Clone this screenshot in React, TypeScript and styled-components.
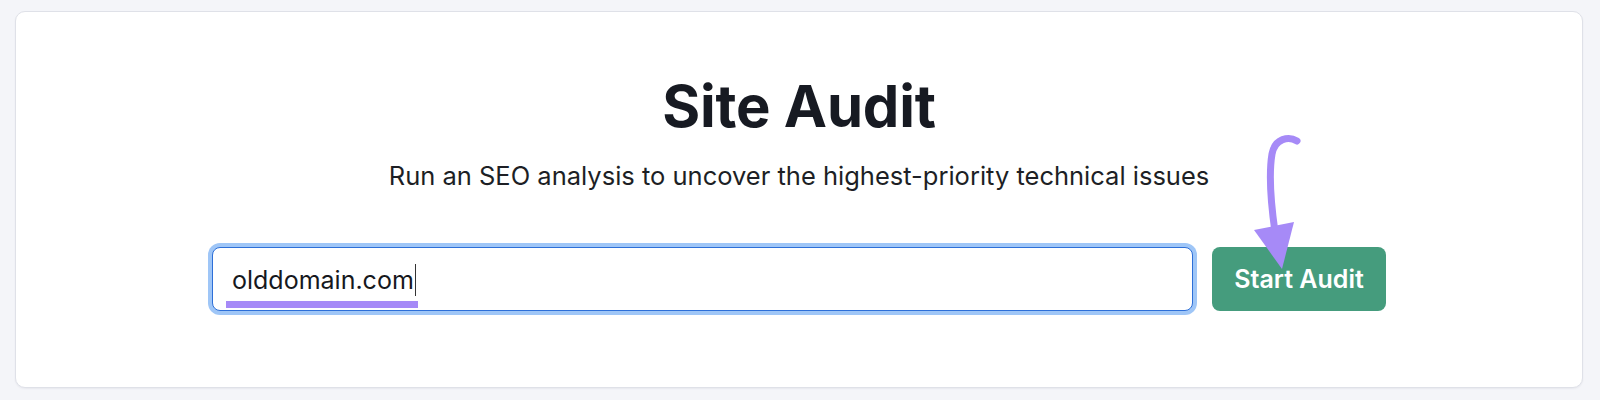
import styled, { createGlobalStyle } from 'styled-components'

const GlobalStyle = createGlobalStyle`
  html, body {
    margin: 0;
    padding: 0;
    background: #f4f5f9;
  }
  body {
    font-family: Inter, "Noto Sans", "Liberation Sans", sans-serif;
    -webkit-font-smoothing: antialiased;
  }
`

function App() {
  return (
    <>
      <GlobalStyle />
      <Page>
        <Card>
          <Title>Site Audit</Title>
          <Subtitle>Run an SEO analysis to uncover the highest-priority technical issues</Subtitle>
          <FormRow>
            <Field>
              <FieldText>
                olddomain.com
                <Caret />
                <Highlight />
              </FieldText>
            </Field>
            <StartButton type="button">Start Audit</StartButton>
            <Pointer width="60" height="145" viewBox="0 0 60 145">
              <path
                d="M52 9 C 44 4, 30 6, 27 22 C 24 40, 26 72, 30 100"
                fill="none"
                stroke="#a68af7"
                strokeWidth="7"
                strokeLinecap="round"
              />
              <path d="M9 98 L49 90 L37 137 Z" fill="#a68af7" />
            </Pointer>
          </FormRow>
        </Card>
      </Page>
    </>
  )
}

const Page = styled.div`
  padding: 11px 17px 12px 15px;
  box-sizing: border-box;
  height: 400px;
`

const Card = styled.div`
  height: 377px;
  box-sizing: border-box;
  background: #fff;
  border: 1px solid #dfe1e8;
  border-radius: 10px;
  box-shadow: 0 1px 2px rgba(30, 35, 60, 0.06);
  display: flex;
  flex-direction: column;
  align-items: center;
  padding-top: 59px;
`

const Title = styled.h1`
  margin: 0;
  font-size: 58px;
  line-height: 70px;
  font-weight: 700;
  color: #171a22;
  letter-spacing: -0.2px;
`

const Subtitle = styled.p`
  margin: 20px 0 0;
  font-size: 25.5px;
  line-height: 30px;
  color: #1d1f25;
`

const FormRow = styled.div`
  position: relative;
  margin-top: 56px;
  display: flex;
  gap: 19px;
  width: 1174px;
`

const Field = styled.div`
  flex: 1;
  height: 64px;
  box-sizing: border-box;
  border: 1px solid #2d6fd8;
  border-radius: 8px;
  box-shadow: 0 0 0 4px #9fc6f7;
  display: flex;
  align-items: center;
  padding: 0 19px;
  background: #fff;
`

const FieldText = styled.span`
  position: relative;
  font-size: 25px;
  color: #16181d;
  display: inline-flex;
  align-items: center;
  margin-top: 2px;
`

const Caret = styled.span`
  display: inline-block;
  width: 1.5px;
  height: 32px;
  background: #333;
  margin-left: 1px;
`

const Highlight = styled.span`
  position: absolute;
  left: -6px;
  right: -2px;
  top: 37px;
  height: 7px;
  background: #a68af7;
`

const StartButton = styled.button`
  width: 174px;
  height: 64px;
  border: none;
  border-radius: 8px;
  background: #459c7d;
  color: #fff;
  font-family: inherit;
  font-size: 25px;
  font-weight: 600;
  cursor: pointer;
`

const Pointer = styled.svg`
  position: absolute;
  left: 1033px;
  top: -115px;
  overflow: visible;
`

export default App
